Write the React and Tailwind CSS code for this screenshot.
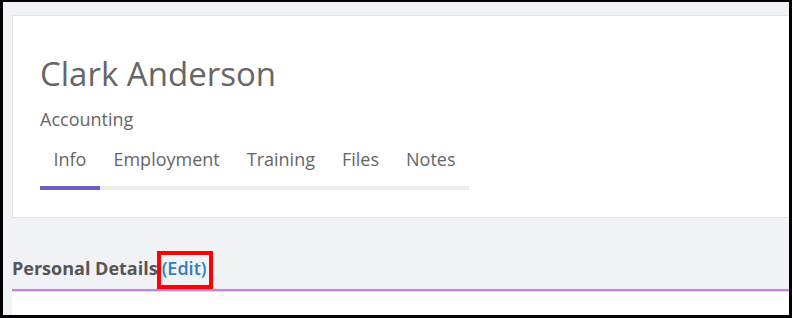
export default function App() {
  const tabs = ["Info", "Employment", "Training", "Files", "Notes"];

  return (
    <div
      className="w-[792px] h-[318px] overflow-hidden border-[3px] border-t-2 border-black bg-[#f1f2f6]"
      style={{ fontFamily: '"Open Sans", "Noto Sans", sans-serif' }}
    >
      <div className="pl-[9px] pt-[13px]">
        {/* Profile card */}
        <div className="bg-white border border-r-0 border-[#e1e3e8] pl-[27px] pt-[36px] pb-[27px]">
          <h1 className="text-[33px] leading-[44px] text-[#666]">Clark Anderson</h1>
          <div className="mt-[11px] text-[18px] leading-[24px] text-[#666]">Accounting</div>
          <div className="mt-[16px] flex">
            {tabs.map((t, i) => (
              <div
                key={t}
                className={
                  "px-[13.5px] pb-[15px] text-[18px] leading-[24px] text-[#666] border-b-4 " +
                  (i === 0 ? "border-[#6a5fc8]" : "border-[#ececec]")
                }
              >
                {t}
              </div>
            ))}
          </div>
        </div>

        {/* Personal details section */}
        <div className="mt-[38px]">
          <div className="pb-[9px] border-b-2 border-[#c384d6] text-[18px] leading-[24px]">
            <span className="font-bold text-[#555]">Personal Details</span>
            <span className="relative ml-[4px] font-semibold text-[#2f7dbd]">
              (Edit)
              <span className="absolute -left-[5px] -right-[7px] -top-[5px] -bottom-[9px] border-4 border-[#ff0000]" />
            </span>
          </div>
          <div className="h-[30px] bg-white border-t border-[#dcdcdc]" />
        </div>
      </div>
    </div>
  );
}
